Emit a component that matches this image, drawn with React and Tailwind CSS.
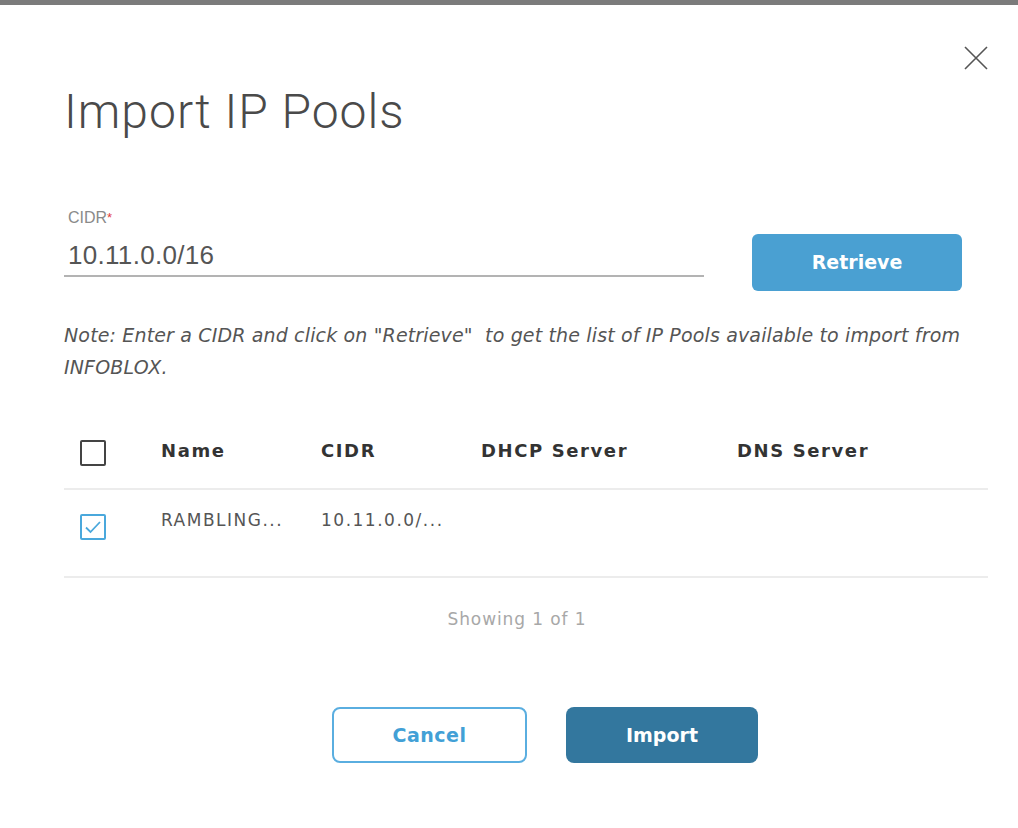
import React from "react";

const dv = { fontFamily: "'DejaVu Sans', 'Liberation Sans', sans-serif" };
const ls = { fontFamily: "'Liberation Sans', Arial, sans-serif" };

export default function App() {
  return (
    <div className="w-[1018px] h-[828px] bg-white relative overflow-hidden" style={ls}>
      <div className="h-[5px] bg-[#7b7b7b]" />
      <button className="absolute left-[962px] top-[44px] w-[28px] h-[28px] flex items-center justify-center">
        <svg width="26" height="26" viewBox="0 0 26 26" fill="none" stroke="#555" strokeWidth="1.6">
          <path d="M2 2 L24 24 M24 2 L2 24" />
        </svg>
      </button>
      <div className="pl-[64px] pr-[30px] pt-[79px]">
        <h1 className="text-[48px] font-light text-[#4a4a4a] leading-[56px] tracking-[1px]" style={{ fontFamily: "Roboto, 'Liberation Sans', sans-serif" }}>Import IP Pools</h1>

        <div className="mt-[68px] flex items-start">
          <div className="w-[640px] shrink-0">
            <div className="text-[16px] text-[#8a8a8a] leading-[20px] pl-[4px]">
              CIDR<span className="text-[#e23a3a] text-[13px] align-top">*</span>
            </div>
            <div className="mt-[12px] text-[26px] text-[#555] leading-[30px] pl-[4px] pb-[5px] border-b-2 border-[#b3b3b3] tracking-[0.3px]">
              10.11.0.0/16
            </div>
          </div>
          <button className="shrink-0 ml-[48px] mt-[26px] w-[210px] h-[57px] rounded-[6px] bg-[#4aa0d2] text-white text-[19px] font-bold" style={dv}>
            Retrieve
          </button>
        </div>

        <p className="mt-[28px] w-[912px] text-[19px] italic text-[#555] leading-[32px] tracking-[0.15px]" style={dv}>
          Note: Enter a CIDR and click on "Retrieve"&nbsp; to get the list of IP Pools available to import from INFOBLOX.
        </p>

        <div className="mt-[29px] w-[924px]" style={dv}>
          <div className="flex items-center h-[78px] border-b-2 border-[#ececec] text-[18px] font-bold text-[#333] tracking-[1.6px]">
            <div className="w-[97px] pl-[16px] mt-[5px]">
              <div className="w-[26px] h-[26px] border-2 border-[#444] rounded-[2px]" />
            </div>
            <div className="w-[160px]">Name</div>
            <div className="w-[160px]">CIDR</div>
            <div className="w-[256px]">DHCP Server</div>
            <div>DNS Server</div>
          </div>
          <div className="h-[88px] border-b-2 border-[#ececec]">
            <div className="flex items-center h-[74px] text-[17px] text-[#555] tracking-[1.5px]">
              <div className="w-[97px] pl-[16px]">
                <div className="w-[26px] h-[26px] border-2 border-[#4aa8dc] rounded-[2px] flex items-center justify-center">
                  <svg width="18" height="14" viewBox="0 0 18 14" fill="none" stroke="#4aa8dc" strokeWidth="1.8">
                    <path d="M2 7.5 L6.5 12 L16 2" />
                  </svg>
                </div>
              </div>
              <div className="w-[160px] mb-[12px]">RAMBLING...</div>
              <div className="w-[160px] mb-[12px]">10.11.0.0/...</div>
            </div>
          </div>
          <div className="text-center text-[17px] leading-[24px] text-[#a8a8a8] mt-[29px] tracking-[0.9px] pr-[18px]">Showing 1 of 1</div>
        </div>

        <div className="mt-[76px] flex justify-center gap-[39px] w-[924px] pl-[38px]" style={dv}>
          <button className="w-[195px] h-[56px] rounded-[8px] border-2 border-[#5aaee0] text-[#42a0d6] text-[19px] font-bold tracking-[0.5px] bg-white">Cancel</button>
          <button className="w-[192px] h-[56px] rounded-[8px] bg-[#33779e] text-white text-[19px] font-bold">Import</button>
        </div>
      </div>
    </div>
  );
}
